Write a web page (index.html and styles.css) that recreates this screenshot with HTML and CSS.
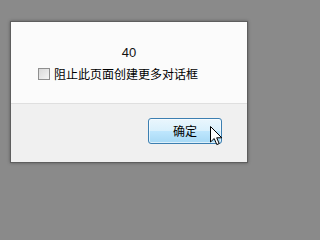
FILE: index.html
```html
<!DOCTYPE html>
<html lang="zh">
<head>
<meta charset="utf-8">
<link rel="stylesheet" href="styles.css">
</head>
<body>
<div class="dialog">
  <div class="content">
    <div class="message">40</div>
    <label class="suppress">
      <span class="box"></span>
      <span class="label-text">阻止此页面创建更多对话框</span>
    </label>
  </div>
  <div class="footer">
    <div class="btn-wrap">
      <button class="ok">确定</button>
      <svg class="cursor" width="13" height="20" viewBox="0 0 13 20">
        <path d="M0.5 0.5 L0.5 16 L4.2 12.5 L6.8 18.6 L9.2 17.6 L6.7 11.8 L11.8 11.8 Z" fill="#fff" stroke="#000" stroke-width="1" stroke-linejoin="round"/>
      </svg>
    </div>
  </div>
</div>
</body>
</html>
```
FILE: styles.css
```css
html, body {
  margin: 0;
  padding: 0;
}
body {
  background: #8a8a8a;
  width: 291px;
  height: 204px;
  overflow: hidden;
  padding: 21px 0 0 10px;
  box-sizing: border-box;
  font-family: "Liberation Sans", "Noto Sans CJK SC", sans-serif;
  font-size: 12px;
  color: #111;
}
.dialog {
  width: 238px;
  height: 142px;
  box-sizing: border-box;
  border: 1px solid #5e5e5e;
  background: #f0f0f0;
  box-shadow: 0 0 3px rgba(0,0,0,0.35);
  display: flex;
  flex-direction: column;
}
.content {
  background: #fbfbfb;
  height: 82px;
  box-sizing: border-box;
  border-bottom: 1px solid #dfdfdf;
  padding-top: 24px;
}
.message {
  text-align: center;
  font-size: 13px;
  line-height: 14px;
  height: 14px;
}
.suppress {
  display: flex;
  align-items: center;
  margin: 7px 0 0 27px;
  height: 14px;
  line-height: 14px;
}
.box {
  width: 10px;
  height: 10px;
  border: 1px solid #8f8f8f;
  background: linear-gradient(135deg, #d8d8d8, #f4f4f4);
  margin-right: 4px;
  flex: none;
}
.label-text {
  font-family: "Noto Sans CJK SC", sans-serif;
  font-size: 12px;
  color: #000;
}
.footer {
  flex: 1;
  display: flex;
  justify-content: flex-end;
  align-items: flex-start;
  padding: 14px 25px 0 0;
}
.btn-wrap {
  position: relative;
}
.ok {
  width: 74px;
  height: 26px;
  border: 1px solid #3c7fb1;
  border-radius: 3px;
  background: linear-gradient(to bottom, #eaf6fd 0%, #d9f0fc 48%, #bee6fd 52%, #a7d9f5 100%);
  font-family: "Noto Sans CJK SC", sans-serif;
  font-size: 12px;
  color: #000;
  padding: 0;
  line-height: 24px;
  box-shadow: inset 0 0 0 1px rgba(255,255,255,0.6);
}
.cursor {
  position: absolute;
  left: 62px;
  top: 8px;
}
```
